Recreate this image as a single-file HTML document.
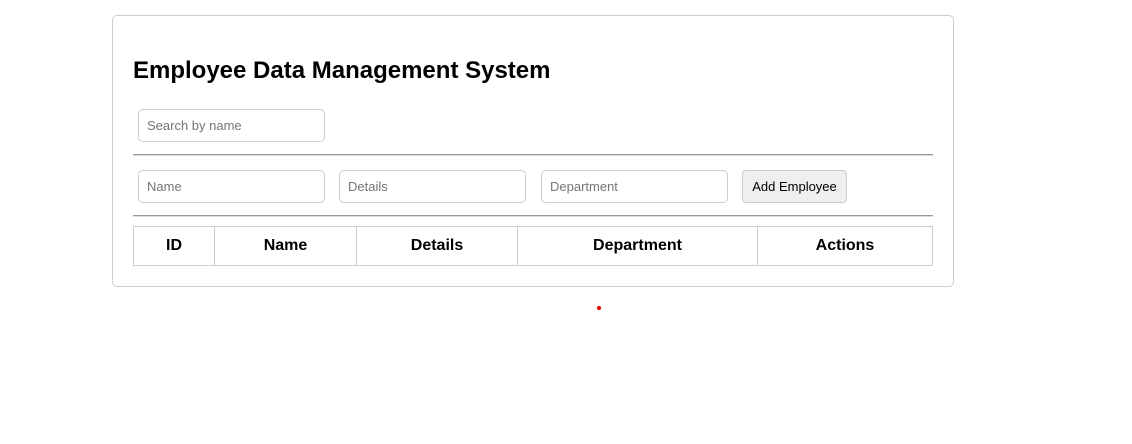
<!DOCTYPE html>
<html><head><style>
*{box-sizing:border-box;margin:0;padding:0}
body{width:1132px;height:444px;background:#fff;font-family:"Liberation Sans",Arial,sans-serif;position:relative;overflow:hidden}
.card{position:absolute;left:112px;top:15px;width:842px;height:272px;border:1px solid #ccc;border-radius:5px}
h1{position:absolute;left:133px;top:57px;font-size:24px;font-weight:bold;color:#000;line-height:28px}
.in{position:absolute;height:33px;width:187px;border:1px solid #ccc;border-radius:5px;font-size:13px;color:#757575;padding:0 8px;line-height:31px}
.btn{position:absolute;left:742px;top:170px;width:105px;height:33px;border:1px solid #ccc;border-radius:4px;background:#efefef;font-size:13px;color:#000;text-align:center;line-height:31px}
.hr{position:absolute;left:133px;width:800px;height:2px;border-top:1px solid #999;border-bottom:1px solid #ddd}
table{position:absolute;left:133px;top:226px;width:800px;height:40px;border-collapse:collapse}
th{border:1px solid #ccc;font-size:16px;font-weight:bold;text-align:center}
.dot{position:absolute;left:597px;top:306px;width:4px;height:4px;border-radius:2px;background:#e00}
</style></head><body>
<div class="card"></div>
<h1>Employee Data Management System</h1>
<div class="in" style="left:138px;top:109px">Search by name</div>
<div class="hr" style="top:154px"></div>
<div class="in" style="left:138px;top:170px">Name</div>
<div class="in" style="left:339px;top:170px">Details</div>
<div class="in" style="left:541px;top:170px">Department</div>
<div class="btn">Add Employee</div>
<div class="hr" style="top:215px"></div>
<table><tr>
<th style="width:81px">ID</th><th style="width:142px">Name</th><th style="width:161px">Details</th><th style="width:240px">Department</th><th>Actions</th>
</tr></table>
<div class="dot"></div>
</body></html>
